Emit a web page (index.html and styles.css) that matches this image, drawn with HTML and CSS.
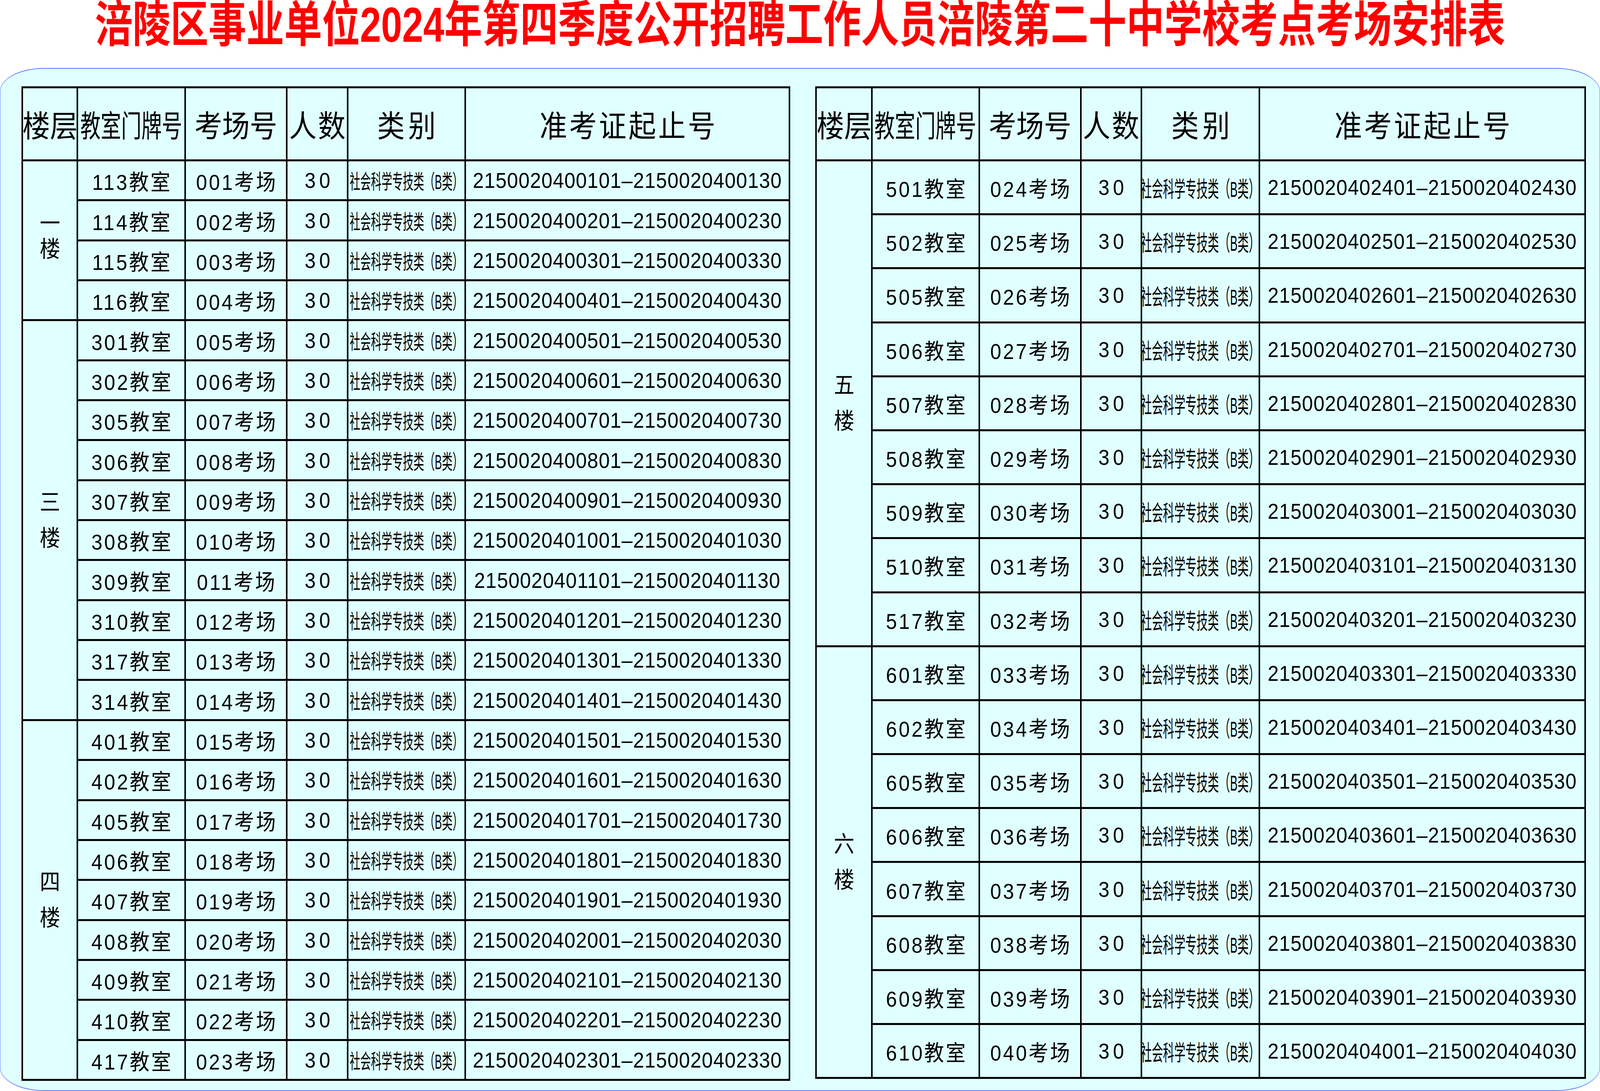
FILE: index.html
```html
<!DOCTYPE html>
<html lang="zh-CN">
<head>
<meta charset="utf-8">
<title>考场安排表</title>
<link rel="stylesheet" href="styles.css">
</head>
<body>
<div class="page">
  <header class="title">
    <h1 class="title-text">涪陵区事业单位2024年第四季度公开招聘工作人员涪陵第二十中学校考点考场安排表</h1>
  </header>
  <main class="board">
    <section class="sheet sheet-a">
      <div class="cell hd"><span>楼层</span></div>
      <div class="cell hd"><span class="squeeze">教室门牌号</span></div>
      <div class="cell hd"><span>考场号</span></div>
      <div class="cell hd hd-num"><span>人数</span></div>
      <div class="cell hd hd-cat"><span>类别</span></div>
      <div class="cell hd hd-range"><span>准考证起止号</span></div>

      <div class="cell floor span4"><div class="floor-text f1">一<br>楼</div></div>
      <div class="cell room"><span>113教室</span></div><div class="cell site"><span>001考场</span></div><div class="cell num"><span>30</span></div><div class="cell cat"><span class="cat-text">社会科学专技类（B类）</span></div><div class="cell range"><span>2150020400101–2150020400130</span></div>
      <div class="cell room"><span>114教室</span></div><div class="cell site"><span>002考场</span></div><div class="cell num"><span>30</span></div><div class="cell cat"><span class="cat-text">社会科学专技类（B类）</span></div><div class="cell range"><span>2150020400201–2150020400230</span></div>
      <div class="cell room"><span>115教室</span></div><div class="cell site"><span>003考场</span></div><div class="cell num"><span>30</span></div><div class="cell cat"><span class="cat-text">社会科学专技类（B类）</span></div><div class="cell range"><span>2150020400301–2150020400330</span></div>
      <div class="cell room"><span>116教室</span></div><div class="cell site"><span>004考场</span></div><div class="cell num"><span>30</span></div><div class="cell cat"><span class="cat-text">社会科学专技类（B类）</span></div><div class="cell range"><span>2150020400401–2150020400430</span></div>

      <div class="cell floor span10"><div class="floor-text">三<br>楼</div></div>
      <div class="cell room"><span>301教室</span></div><div class="cell site"><span>005考场</span></div><div class="cell num"><span>30</span></div><div class="cell cat"><span class="cat-text">社会科学专技类（B类）</span></div><div class="cell range"><span>2150020400501–2150020400530</span></div>
      <div class="cell room"><span>302教室</span></div><div class="cell site"><span>006考场</span></div><div class="cell num"><span>30</span></div><div class="cell cat"><span class="cat-text">社会科学专技类（B类）</span></div><div class="cell range"><span>2150020400601–2150020400630</span></div>
      <div class="cell room"><span>305教室</span></div><div class="cell site"><span>007考场</span></div><div class="cell num"><span>30</span></div><div class="cell cat"><span class="cat-text">社会科学专技类（B类）</span></div><div class="cell range"><span>2150020400701–2150020400730</span></div>
      <div class="cell room"><span>306教室</span></div><div class="cell site"><span>008考场</span></div><div class="cell num"><span>30</span></div><div class="cell cat"><span class="cat-text">社会科学专技类（B类）</span></div><div class="cell range"><span>2150020400801–2150020400830</span></div>
      <div class="cell room"><span>307教室</span></div><div class="cell site"><span>009考场</span></div><div class="cell num"><span>30</span></div><div class="cell cat"><span class="cat-text">社会科学专技类（B类）</span></div><div class="cell range"><span>2150020400901–2150020400930</span></div>
      <div class="cell room"><span>308教室</span></div><div class="cell site"><span>010考场</span></div><div class="cell num"><span>30</span></div><div class="cell cat"><span class="cat-text">社会科学专技类（B类）</span></div><div class="cell range"><span>2150020401001–2150020401030</span></div>
      <div class="cell room"><span>309教室</span></div><div class="cell site"><span>011考场</span></div><div class="cell num"><span>30</span></div><div class="cell cat"><span class="cat-text">社会科学专技类（B类）</span></div><div class="cell range"><span>2150020401101–2150020401130</span></div>
      <div class="cell room"><span>310教室</span></div><div class="cell site"><span>012考场</span></div><div class="cell num"><span>30</span></div><div class="cell cat"><span class="cat-text">社会科学专技类（B类）</span></div><div class="cell range"><span>2150020401201–2150020401230</span></div>
      <div class="cell room"><span>317教室</span></div><div class="cell site"><span>013考场</span></div><div class="cell num"><span>30</span></div><div class="cell cat"><span class="cat-text">社会科学专技类（B类）</span></div><div class="cell range"><span>2150020401301–2150020401330</span></div>
      <div class="cell room"><span>314教室</span></div><div class="cell site"><span>014考场</span></div><div class="cell num"><span>30</span></div><div class="cell cat"><span class="cat-text">社会科学专技类（B类）</span></div><div class="cell range"><span>2150020401401–2150020401430</span></div>

      <div class="cell floor span9"><div class="floor-text">四<br>楼</div></div>
      <div class="cell room"><span>401教室</span></div><div class="cell site"><span>015考场</span></div><div class="cell num"><span>30</span></div><div class="cell cat"><span class="cat-text">社会科学专技类（B类）</span></div><div class="cell range"><span>2150020401501–2150020401530</span></div>
      <div class="cell room"><span>402教室</span></div><div class="cell site"><span>016考场</span></div><div class="cell num"><span>30</span></div><div class="cell cat"><span class="cat-text">社会科学专技类（B类）</span></div><div class="cell range"><span>2150020401601–2150020401630</span></div>
      <div class="cell room"><span>405教室</span></div><div class="cell site"><span>017考场</span></div><div class="cell num"><span>30</span></div><div class="cell cat"><span class="cat-text">社会科学专技类（B类）</span></div><div class="cell range"><span>2150020401701–2150020401730</span></div>
      <div class="cell room"><span>406教室</span></div><div class="cell site"><span>018考场</span></div><div class="cell num"><span>30</span></div><div class="cell cat"><span class="cat-text">社会科学专技类（B类）</span></div><div class="cell range"><span>2150020401801–2150020401830</span></div>
      <div class="cell room"><span>407教室</span></div><div class="cell site"><span>019考场</span></div><div class="cell num"><span>30</span></div><div class="cell cat"><span class="cat-text">社会科学专技类（B类）</span></div><div class="cell range"><span>2150020401901–2150020401930</span></div>
      <div class="cell room"><span>408教室</span></div><div class="cell site"><span>020考场</span></div><div class="cell num"><span>30</span></div><div class="cell cat"><span class="cat-text">社会科学专技类（B类）</span></div><div class="cell range"><span>2150020402001–2150020402030</span></div>
      <div class="cell room"><span>409教室</span></div><div class="cell site"><span>021考场</span></div><div class="cell num"><span>30</span></div><div class="cell cat"><span class="cat-text">社会科学专技类（B类）</span></div><div class="cell range"><span>2150020402101–2150020402130</span></div>
      <div class="cell room"><span>410教室</span></div><div class="cell site"><span>022考场</span></div><div class="cell num"><span>30</span></div><div class="cell cat"><span class="cat-text">社会科学专技类（B类）</span></div><div class="cell range"><span>2150020402201–2150020402230</span></div>
      <div class="cell room"><span>417教室</span></div><div class="cell site"><span>023考场</span></div><div class="cell num"><span>30</span></div><div class="cell cat"><span class="cat-text">社会科学专技类（B类）</span></div><div class="cell range"><span>2150020402301–2150020402330</span></div>
    </section>

    <section class="sheet sheet-b">
      <div class="cell hd"><span>楼层</span></div>
      <div class="cell hd"><span class="squeeze">教室门牌号</span></div>
      <div class="cell hd"><span>考场号</span></div>
      <div class="cell hd hd-num"><span>人数</span></div>
      <div class="cell hd hd-cat"><span>类别</span></div>
      <div class="cell hd hd-range"><span>准考证起止号</span></div>

      <div class="cell floor span9"><div class="floor-text">五<br>楼</div></div>
      <div class="cell room"><span>501教室</span></div><div class="cell site"><span>024考场</span></div><div class="cell num"><span>30</span></div><div class="cell cat"><span class="cat-text">社会科学专技类（B类）</span></div><div class="cell range"><span>2150020402401–2150020402430</span></div>
      <div class="cell room"><span>502教室</span></div><div class="cell site"><span>025考场</span></div><div class="cell num"><span>30</span></div><div class="cell cat"><span class="cat-text">社会科学专技类（B类）</span></div><div class="cell range"><span>2150020402501–2150020402530</span></div>
      <div class="cell room"><span>505教室</span></div><div class="cell site"><span>026考场</span></div><div class="cell num"><span>30</span></div><div class="cell cat"><span class="cat-text">社会科学专技类（B类）</span></div><div class="cell range"><span>2150020402601–2150020402630</span></div>
      <div class="cell room"><span>506教室</span></div><div class="cell site"><span>027考场</span></div><div class="cell num"><span>30</span></div><div class="cell cat"><span class="cat-text">社会科学专技类（B类）</span></div><div class="cell range"><span>2150020402701–2150020402730</span></div>
      <div class="cell room"><span>507教室</span></div><div class="cell site"><span>028考场</span></div><div class="cell num"><span>30</span></div><div class="cell cat"><span class="cat-text">社会科学专技类（B类）</span></div><div class="cell range"><span>2150020402801–2150020402830</span></div>
      <div class="cell room"><span>508教室</span></div><div class="cell site"><span>029考场</span></div><div class="cell num"><span>30</span></div><div class="cell cat"><span class="cat-text">社会科学专技类（B类）</span></div><div class="cell range"><span>2150020402901–2150020402930</span></div>
      <div class="cell room"><span>509教室</span></div><div class="cell site"><span>030考场</span></div><div class="cell num"><span>30</span></div><div class="cell cat"><span class="cat-text">社会科学专技类（B类）</span></div><div class="cell range"><span>2150020403001–2150020403030</span></div>
      <div class="cell room"><span>510教室</span></div><div class="cell site"><span>031考场</span></div><div class="cell num"><span>30</span></div><div class="cell cat"><span class="cat-text">社会科学专技类（B类）</span></div><div class="cell range"><span>2150020403101–2150020403130</span></div>
      <div class="cell room"><span>517教室</span></div><div class="cell site"><span>032考场</span></div><div class="cell num"><span>30</span></div><div class="cell cat"><span class="cat-text">社会科学专技类（B类）</span></div><div class="cell range"><span>2150020403201–2150020403230</span></div>

      <div class="cell floor span8"><div class="floor-text">六<br>楼</div></div>
      <div class="cell room"><span>601教室</span></div><div class="cell site"><span>033考场</span></div><div class="cell num"><span>30</span></div><div class="cell cat"><span class="cat-text">社会科学专技类（B类）</span></div><div class="cell range"><span>2150020403301–2150020403330</span></div>
      <div class="cell room"><span>602教室</span></div><div class="cell site"><span>034考场</span></div><div class="cell num"><span>30</span></div><div class="cell cat"><span class="cat-text">社会科学专技类（B类）</span></div><div class="cell range"><span>2150020403401–2150020403430</span></div>
      <div class="cell room"><span>605教室</span></div><div class="cell site"><span>035考场</span></div><div class="cell num"><span>30</span></div><div class="cell cat"><span class="cat-text">社会科学专技类（B类）</span></div><div class="cell range"><span>2150020403501–2150020403530</span></div>
      <div class="cell room"><span>606教室</span></div><div class="cell site"><span>036考场</span></div><div class="cell num"><span>30</span></div><div class="cell cat"><span class="cat-text">社会科学专技类（B类）</span></div><div class="cell range"><span>2150020403601–2150020403630</span></div>
      <div class="cell room"><span>607教室</span></div><div class="cell site"><span>037考场</span></div><div class="cell num"><span>30</span></div><div class="cell cat"><span class="cat-text">社会科学专技类（B类）</span></div><div class="cell range"><span>2150020403701–2150020403730</span></div>
      <div class="cell room"><span>608教室</span></div><div class="cell site"><span>038考场</span></div><div class="cell num"><span>30</span></div><div class="cell cat"><span class="cat-text">社会科学专技类（B类）</span></div><div class="cell range"><span>2150020403801–2150020403830</span></div>
      <div class="cell room"><span>609教室</span></div><div class="cell site"><span>039考场</span></div><div class="cell num"><span>30</span></div><div class="cell cat"><span class="cat-text">社会科学专技类（B类）</span></div><div class="cell range"><span>2150020403901–2150020403930</span></div>
      <div class="cell room"><span>610教室</span></div><div class="cell site"><span>040考场</span></div><div class="cell num"><span>30</span></div><div class="cell cat"><span class="cat-text">社会科学专技类（B类）</span></div><div class="cell range"><span>2150020404001–2150020404030</span></div>
    </section>
  </main>
</div>
</body>
</html>
```

FILE: styles.css
```css
/* Horizontal design unit: the 4532px-wide design mapped onto a 4096px-wide viewport.
   Vertical measures are in plain px. Text is compressed horizontally by the same ratio. */
:root {
  --ux: 0.90381px;
  --sx: 0.90381;
}

html, body {
  margin: 0;
  padding: 0;
  background: #ffffff;
}

body {
  width: calc(4532 * var(--ux));
  height: 2793px;
  overflow: hidden;
  font-family: "Liberation Sans", "Noto Sans CJK SC", sans-serif;
  color: #000000;
}

.page {
  display: flex;
  flex-direction: column;
  width: calc(4532 * var(--ux));
  height: 2793px;
}

.title {
  height: 174px;
  flex-shrink: 0;
  display: flex;
  justify-content: center;
}

.title-text {
  margin: 0;
  font-size: 97px;
  line-height: 97px;
  font-weight: 700;
  color: #ff0000;
  white-space: nowrap;
  transform: scaleY(1.3);
  transform-origin: 50% 0;
}

.board {
  flex: 1;
  box-sizing: border-box;
  border-style: solid;
  border-color: #5b7cff;
  border-width: 2px calc(2 * var(--ux));
  border-radius: calc(125 * var(--ux)) / 60px;
  background: #e0ffff;
  display: flex;
  align-items: flex-start;
  padding: 45px calc(36 * var(--ux)) 0 calc(60 * var(--ux));
  gap: calc(71 * var(--ux));
}

.sheet {
  display: grid;
  flex-shrink: 0;
  border-top: 5px solid #000;
  border-left: calc(5 * var(--ux)) solid #000;
}

.sheet-a {
  grid-template-columns:
    calc(156 * var(--ux)) calc(305 * var(--ux)) calc(288 * var(--ux))
    calc(172 * var(--ux)) calc(333 * var(--ux)) calc(919 * var(--ux));
  grid-template-rows: 187px repeat(23, 102.35px);
}

.sheet-b {
  grid-template-columns:
    calc(158 * var(--ux)) calc(304 * var(--ux)) calc(288 * var(--ux))
    calc(171 * var(--ux)) calc(335 * var(--ux)) calc(922 * var(--ux));
  grid-template-rows: 187px repeat(17, 138.2px);
}

.cell {
  box-sizing: border-box;
  border-right: calc(5 * var(--ux)) solid #000;
  border-bottom: 5px solid #000;
  display: flex;
  align-items: center;
  justify-content: center;
  white-space: nowrap;
  font-size: 56px;
  min-width: 0;
}

.cell > span,
.floor-text {
  display: inline-block;
  flex-shrink: 0;
  transform: scaleX(var(--sx));
}

.hd {
  font-size: 78px;
}

.hd-num span {
  letter-spacing: 4px;
  margin-right: -4px;
}

.hd-cat span {
  letter-spacing: 10px;
  margin-right: -10px;
}

.hd-range span {
  letter-spacing: 6px;
  margin-right: -6px;
}

.cell > .squeeze {
  transform: scaleX(0.669);
}

.span4 { grid-row: span 4; }
.span8 { grid-row: span 8; }
.span9 { grid-row: span 9; }
.span10 { grid-row: span 10; }

.floor-text {
  font-size: 58px;
  line-height: 92px;
  text-align: center;
}

.floor-text.f1 {
  line-height: 66px;
  margin-bottom: 20px;
}

.room span,
.site span {
  letter-spacing: 5px;
  margin-right: -5px;
}

.num span {
  letter-spacing: 10px;
  margin-right: -10px;
}

.cell > .cat-text {
  font-size: 52px;
  transform: scaleX(0.524);
}

.sheet-b .cell > .cat-text {
  font-size: 56px;
  transform: scaleX(0.511);
}

.range span {
  letter-spacing: 1.3px;
}
```
